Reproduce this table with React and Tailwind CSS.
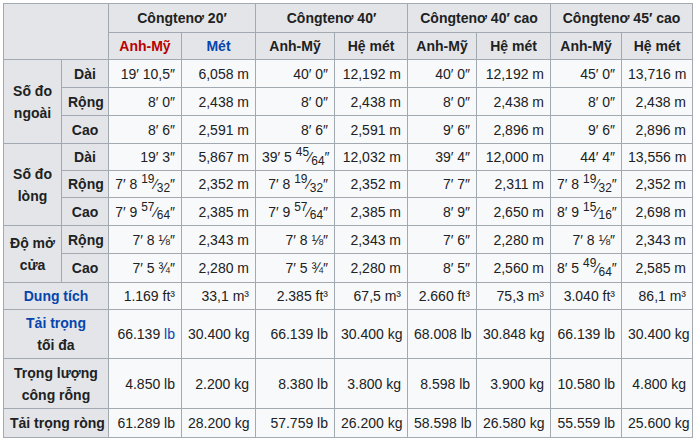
import React from 'react';

const Frac = ({ n, d }) => (
  <>
    <sup className="text-[85%]">{n}</sup>⁄<sub className="text-[85%]">{d}</sub>
  </>
);

const groups = [
  {
    label: ['Số đo', 'ngoài'],
    rows: [
      ['Dài', ['19′ 10,5″', '6,058 m', '40′ 0″', '12,192 m', '40′ 0″', '12,192 m', '45′ 0″', '13,716 m']],
      ['Rộng', ['8′ 0″', '2,438 m', '8′ 0″', '2,438 m', '8′ 0″', '2,438 m', '8′ 0″', '2,438 m']],
      ['Cao', ['8′ 6″', '2,591 m', '8′ 6″', '2,591 m', '9′ 6″', '2,896 m', '9′ 6″', '2,896 m']],
    ],
    heights: ['h-[28px]', 'h-[28px]', 'h-[28px]'],
  },
  {
    label: ['Số đo', 'lòng'],
    rows: [
      ['Dài', ['19′ 3″', '5,867 m', <>39′ 5 <Frac n="45" d="64" />″</>, '12,032 m', '39′ 4″', '12,000 m', '44′ 4″', '13,556 m']],
      ['Rộng', [<>7′ 8 <Frac n="19" d="32" />″</>, '2,352 m', <>7′ 8 <Frac n="19" d="32" />″</>, '2,352 m', '7′ 7″', '2,311 m', <>7′ 8 <Frac n="19" d="32" />″</>, '2,352 m']],
      ['Cao', [<>7′ 9 <Frac n="57" d="64" />″</>, '2,385 m', <>7′ 9 <Frac n="57" d="64" />″</>, '2,385 m', '8′ 9″', '2,650 m', <>8′ 9 <Frac n="15" d="16" />″</>, '2,698 m']],
    ],
    heights: ['h-[27px]', 'h-[27px]', 'h-[28px]'],
  },
  {
    label: ['Độ mở', 'cửa'],
    rows: [
      ['Rộng', ['7′ 8 ⅛″', '2,343 m', '7′ 8 ⅛″', '2,343 m', '7′ 6″', '2,280 m', '7′ 8 ⅛″', '2,343 m']],
      ['Cao', ['7′ 5 ¾″', '2,280 m', '7′ 5 ¾″', '2,280 m', '8′ 5″', '2,560 m', <>8′ 5 <Frac n="49" d="64" />″</>, '2,585 m']],
    ],
    heights: ['h-[28px]', 'h-[29px]'],
  },
];

const th = 'border border-[#a2a9b1] bg-[#e4e5e8] font-bold text-center px-[6px] py-0';
const td = 'border border-[#a2a9b1] bg-[#f8f9fa] text-right px-[6px] py-0 whitespace-nowrap';
const blue = 'text-[#0645ad]';

export default function App() {
  return (
    <div className="bg-white w-[700px] h-[441px] pl-[3px] pt-[3px]">
      <table
        className="border-collapse table-fixed text-[14px] text-[#202122] leading-[22px]"
        style={{ fontFamily: '"Liberation Sans", Arial, sans-serif', width: 689 }}
      >
        <colgroup>
          {[58, 47, 73, 74, 79, 73, 69, 74, 71, 71].map((w, i) => (
            <col key={i} style={{ width: w }} />
          ))}
        </colgroup>
        <tbody>
          <tr className="h-[29px]">
            <th className={th} colSpan={2} rowSpan={2}></th>
            <th className={th} colSpan={2}>Côngtenơ 20′</th>
            <th className={th} colSpan={2}>Côngtenơ 40′</th>
            <th className={th} colSpan={2}>Côngtenơ 40′ cao</th>
            <th className={th} colSpan={2}>Côngtenơ 45′ cao</th>
          </tr>
          <tr className="h-[27px]">
            <th className={`${th} text-[#ba0000]`}>Anh-Mỹ</th>
            <th className={`${th} ${blue}`}>Mét</th>
            <th className={th}>Anh-Mỹ</th>
            <th className={th}>Hệ mét</th>
            <th className={th}>Anh-Mỹ</th>
            <th className={th}>Hệ mét</th>
            <th className={th}>Anh-Mỹ</th>
            <th className={th}>Hệ mét</th>
          </tr>
          {groups.map((g) =>
            g.rows.map(([name, vals], ri) => (
              <tr key={g.label.join() + name} className={g.heights[ri]}>
                {ri === 0 && (
                  <th className={th} rowSpan={g.rows.length}>
                    {g.label[0]}
                    <br />
                    {g.label[1]}
                  </th>
                )}
                <th className={th}>{name}</th>
                {vals.map((v, i) => (
                  <td key={i} className={td}>
                    {v}
                  </td>
                ))}
              </tr>
            ))
          )}
          <tr className="h-[27px]">
            <th className={`${th} ${blue}`} colSpan={2}>Dung tích</th>
            {['1.169 ft³', '33,1 m³', '2.385 ft³', '67,5 m³', '2.660 ft³', '75,3 m³', '3.040 ft³', '86,1 m³'].map((v, i) => (
              <td key={i} className={td}>{v}</td>
            ))}
          </tr>
          <tr className="h-[49px]">
            <th className={th} colSpan={2}>
              <span className={blue}>Tải trọng</span>
              <br />
              tối đa
            </th>
            <td className={td}>
              66.139 <span className={blue}>lb</span>
            </td>
            {['30.400 kg', '66.139 lb', '30.400 kg', '68.008 lb', '30.848 kg', '66.139 lb', '30.400 kg'].map((v, i) => (
              <td key={i} className={td}>{v}</td>
            ))}
          </tr>
          <tr className="h-[50px]">
            <th className={th} colSpan={2}>
              Trọng lượng
              <br />
              công rỗng
            </th>
            {['4.850 lb', '2.200 kg', '8.380 lb', '3.800 kg', '8.598 lb', '3.900 kg', '10.580 lb', '4.800 kg'].map((v, i) => (
              <td key={i} className={td}>{v}</td>
            ))}
          </tr>
          <tr className="h-[29px]">
            <th className={`${th} whitespace-nowrap px-[4px]`} colSpan={2}>Tải trọng ròng</th>
            {['61.289 lb', '28.200 kg', '57.759 lb', '26.200 kg', '58.598 lb', '26.580 kg', '55.559 lb', '25.600 kg'].map((v, i) => (
              <td key={i} className={td}>{v}</td>
            ))}
          </tr>
        </tbody>
      </table>
    </div>
  );
}
